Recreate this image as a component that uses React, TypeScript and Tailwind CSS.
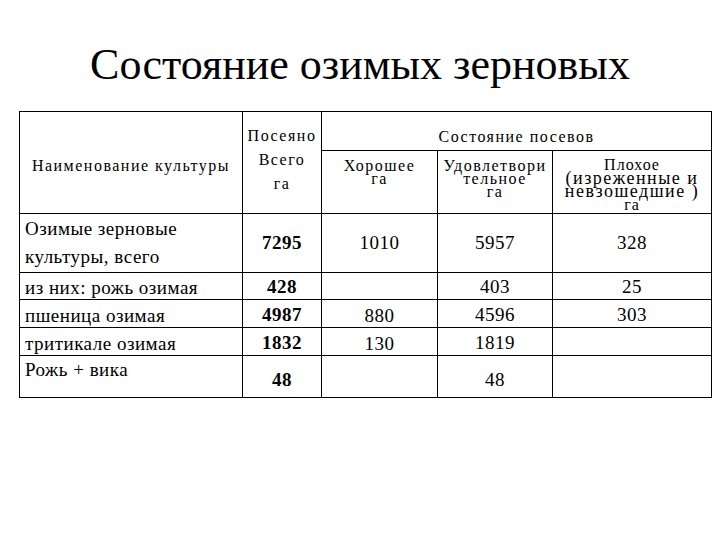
const rows = [
  { name: 'из них: рожь озимая', total: '428', good: '', ok: '403', bad: '25', h: 'h-[27px]' },
  { name: 'пшеница озимая', total: '4987', good: '880', ok: '4596', bad: '303', h: 'h-[28px]' },
  { name: 'тритикале озимая', total: '1832', good: '130', ok: '1819', bad: '', h: 'h-[28px]' },
]

export default function App() {
  const cell = "border border-black p-0 font-['Liberation_Serif',serif] text-black"
  const head = `${cell} text-[16px] tracking-[1.5px] font-normal whitespace-nowrap`
  const body = `${cell} text-[19px] tracking-[0.5px]`
  return (
    <div className="w-[720px] h-[540px] bg-white text-black font-['Liberation_Serif',serif] overflow-hidden">
      <h1 className="pt-[41px] h-[111px] text-center text-[44px] leading-[48px]">
        Состояние озимых зерновых
      </h1>
      <table className="ml-[19px] border-collapse table-fixed w-[692px] font-['Liberation_Serif',serif]">
        <colgroup>
          <col className="w-[223px]" />
          <col className="w-[79px]" />
          <col className="w-[116px]" />
          <col className="w-[115px]" />
          <col className="w-[159px]" />
        </colgroup>
        <thead>
          <tr className="h-[39px]">
            <th rowSpan={2} className={`${head} tracking-[1.2px] text-center align-middle pt-[6px]`}>
              Наименование культуры
            </th>
            <th rowSpan={2} className={`${head} tracking-[0.9px] text-center align-top pt-[12px] leading-[24px]`}>
              Посеяно
              <br />
              Всего
              <br />
              га
            </th>
            <th colSpan={3} className={`${head} text-center align-bottom pb-[1px]`}>
              Состояние посевов
            </th>
          </tr>
          <tr className="h-[63px]">
            <th className={`${head} align-top pt-[8px] leading-[13px]`}>
              Хорошее
              <br />
              га
            </th>
            <th className={`${head} align-top pt-[8px] leading-[13px]`}>
              Удовлетвори
              <br />
              тельное
              <br />
              га
            </th>
            <th className={`${head} tracking-[1px] align-top pt-[8px] leading-[12.5px]`}>
              Плохое
              <br />
              <span className="text-[18px] tracking-[1.5px]">(изреженные и</span>
              <br />
              <span className="text-[18px] tracking-[1.5px]">невзошедшие )</span>
              <br />
              га
            </th>
          </tr>
        </thead>
        <tbody>
          <tr className="h-[59px]">
            <td className={`${body} px-[5px] leading-[28px] align-middle`}>
              Озимые зерновые
              <br />
              культуры, всего
            </td>
            <td className={`${body} text-center font-bold`}>7295</td>
            <td className={`${body} text-center`}>1010</td>
            <td className={`${body} text-center`}>5957</td>
            <td className={`${body} text-center`}>328</td>
          </tr>
          {rows.map((r) => (
            <tr key={r.name} className={r.h}>
              <td className={`${body} px-[5px] leading-[20px] pt-[4px] align-middle`}>{r.name}</td>
              <td className={`${body} text-center font-bold leading-[20px] pt-[2px]`}>{r.total}</td>
              <td className={`${body} text-center leading-[20px] pt-[4px]`}>{r.good}</td>
              <td className={`${body} text-center leading-[20px] pt-[2px]`}>{r.ok}</td>
              <td className={`${body} text-center leading-[20px] pt-[2px]`}>{r.bad}</td>
            </tr>
          ))}
          <tr className="h-[42px]">
            <td className={`${body} px-[5px] align-top leading-[20px] pt-[4px]`}>Рожь + вика</td>
            <td className={`${body} text-center font-bold pt-[8px]`}>48</td>
            <td className={body}></td>
            <td className={`${body} text-center pt-[8px]`}>48</td>
            <td className={body}></td>
          </tr>
        </tbody>
      </table>
    </div>
  )
}
